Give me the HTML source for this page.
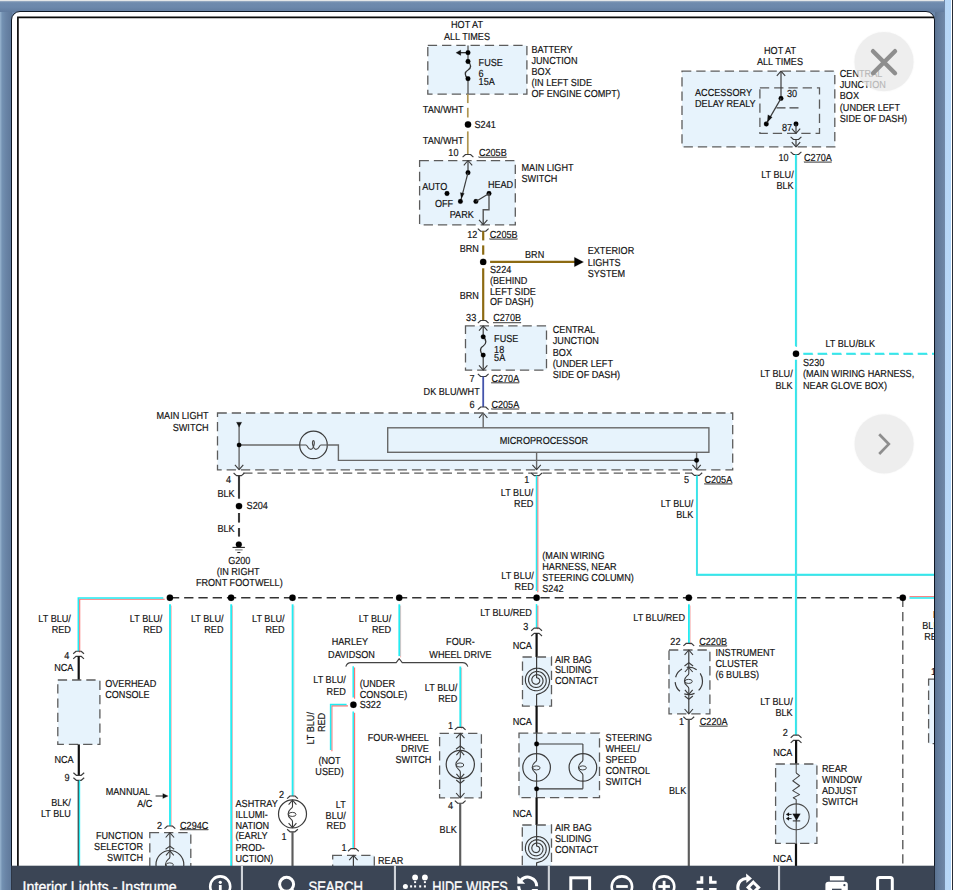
<!DOCTYPE html>
<html lang="en"><head><meta charset="utf-8"><title>Interior Lights - Instrument Illumination</title>
<style>
html,body{margin:0;padding:0;background:#6a86a9;}
body{width:953px;height:890px;overflow:hidden;position:relative;font-family:"Liberation Sans",Arial,sans-serif;}
#bg{position:absolute;left:0;top:0;width:12px;height:890px;
 background:linear-gradient(90deg,#9bb8d2 0,#85a2c0 1px,#7290b1 2.5px,#6984a6 6px,#5e7899 12px);}
#topstrip{position:absolute;left:0;top:0;width:945px;height:12px;
 background:linear-gradient(180deg,#e4e7e8 0,#e4e7e8 1px,#7f98b6 1.6px,#6f8bad 3px,#6c88ab 7px,#617c9f 12px);}
#panel{position:absolute;left:11px;top:11px;width:924px;height:900px;background:#fff;border:1.3px solid #0e1724;border-radius:9px 9px 0 0;box-sizing:border-box;}
#rightgrey{position:absolute;left:935px;top:0;width:10px;height:890px;
 background:linear-gradient(90deg,#5a7290 0,#627b9b 3px,#6f88a7 10px);}
#rightbar{position:absolute;left:944px;top:0;width:9px;height:890px;
 background:linear-gradient(90deg,#6f88a7 0,#6f88a7 .6px,#b4d6f8 1.2px,#b9d8f6 4px,#b2d6fa 6.6px,#fff 7.2px,#fff 8px,#2a2f38 8.3px,#20252e 9px);}
svg{position:absolute;left:0;top:0;}
svg text{font-family:"Liberation Sans",Arial,sans-serif;}
</style></head><body>
<div id="bg"></div>
<div id="rightgrey"></div>
<div id="topstrip"></div>
<div id="rightbar"></div>
<div id="panel"></div>

<svg id="dia" width="953" height="890" viewBox="0 0 953 890" font-size="10.2" fill="#141414" text-rendering="geometricPrecision">
<defs><clipPath id="cp"><rect x="19" y="18" width="915" height="848"/></clipPath></defs>
<path d="M17.9 890 L17.9 17.3 L934 17.3" fill="none" stroke="#0a0a0a" stroke-width="1.7"/>
<g clip-path="url(#cp)" stroke="#141414" stroke-width="0.18">
<rect x="427.8" y="45.4" width="99.1" height="48.8" fill="#e7f3fc" stroke="#5c5c5c" stroke-width="1.3" stroke-dasharray="9.3 4.95"/>
<text transform="translate(467.0 27.9) scale(0.893 1)" text-anchor="middle">HOT AT</text>
<text transform="translate(467.0 39.9) scale(0.893 1)" text-anchor="middle">ALL TIMES</text>
<path d="M468.0 45.4 L468.0 61.5" fill="none" stroke="#6a6a6a" stroke-width="1.5" stroke-linecap="butt" stroke-linejoin="miter"/>
<path d="M468.0 78.7 L468.0 94.2" fill="none" stroke="#6a6a6a" stroke-width="1.5" stroke-linecap="butt" stroke-linejoin="miter"/>
<path d="M468.0 52.7 L459.0 52.7" fill="none" stroke="#222" stroke-width="1.2" stroke-linecap="butt" stroke-linejoin="miter"/>
<path d="M455.9 52.7 L460.8 49.9 L460.8 55.5 Z" fill="#111"/>
<path d="M468 61.5 C471.6 64.5 471.4 68 468 70 C464.4 72 464.4 76 468 78.7" fill="none" stroke="#333" stroke-width="1.3" stroke-linejoin="round"/>
<circle cx="468.0" cy="52.7" r="2.4" fill="#000"/>
<circle cx="468.0" cy="61.5" r="2.4" fill="#000"/>
<circle cx="468.0" cy="78.7" r="2.4" fill="#000"/>
<text transform="translate(478.6 65.8) scale(0.893 1)">FUSE</text>
<text transform="translate(478.6 76.8) scale(0.893 1)">6</text>
<text transform="translate(478.6 84.8) scale(0.893 1)">15A</text>
<text transform="translate(531.5 53.0) scale(0.893 1)">BATTERY</text>
<text transform="translate(531.5 64.0) scale(0.893 1)">JUNCTION</text>
<text transform="translate(531.5 75.1) scale(0.893 1)">BOX</text>
<text transform="translate(531.5 86.1) scale(0.893 1)">(IN LEFT SIDE</text>
<text transform="translate(531.5 97.2) scale(0.893 1)">OF ENGINE COMPT)</text>
<path d="M467.8 94.2 L467.8 103.1" fill="none" stroke="#b09652" stroke-width="1.7" stroke-linecap="butt" stroke-linejoin="miter"/>
<path d="M467.8 107.8 L467.8 117.5" fill="none" stroke="#b09652" stroke-width="1.7" stroke-linecap="butt" stroke-linejoin="miter"/>
<path d="M467.8 131.4 L467.8 154.5" fill="none" stroke="#b09652" stroke-width="1.7" stroke-linecap="butt" stroke-linejoin="miter"/>
<text transform="translate(463.6 113.0) scale(0.893 1)" text-anchor="end">TAN/WHT</text>
<text transform="translate(463.6 143.6) scale(0.893 1)" text-anchor="end">TAN/WHT</text>
<circle cx="468.0" cy="124.5" r="3.2" fill="#000"/>
<text transform="translate(474.5 128.1) scale(0.893 1)">S241</text>
<text transform="translate(458.5 156.2) scale(0.893 1)" text-anchor="end">10</text>
<rect x="478.9" y="156.9" width="27.8" height="0.85" fill="#5a5a5a"/>
<text transform="translate(478.9 156.2) scale(0.893 1)">C205B</text>
<path d="M462.6 157.1 L465.5 154.5 L470.5 154.5 L473.4 157.1" fill="none" stroke="#3c3c3c" stroke-width="1.15" stroke-linejoin="round"/>
<rect x="419.6" y="160.6" width="95.7" height="64.2" fill="#e7f3fc" stroke="#5c5c5c" stroke-width="1.3" stroke-dasharray="9.3 4.95"/>
<path d="M463.8 165.3 L468.0 160.5 L472.2 165.3" fill="none" stroke="#3c3c3c" stroke-width="1.1" stroke-linejoin="round"/>
<path d="M468.0 160.5 L468.0 172.7" fill="none" stroke="#3c3c3c" stroke-width="1.2" stroke-linecap="butt" stroke-linejoin="miter"/>
<circle cx="468.0" cy="172.7" r="2.4" fill="#000"/>
<path d="M468.0 172.7 L460.6 201.4" fill="none" stroke="#3c3c3c" stroke-width="1.2" stroke-linecap="butt" stroke-linejoin="miter"/>
<path d="M461.3 198.6 L460.3 192.6 L464.3 193.6 Z" fill="#111"/>
<circle cx="447.0" cy="193.5" r="2.4" fill="#000"/>
<circle cx="460.4" cy="201.4" r="2.4" fill="#000"/>
<circle cx="475.9" cy="201.4" r="2.4" fill="#000"/>
<circle cx="489.0" cy="193.5" r="2.4" fill="#000"/>
<path d="M475.9 201.4 L489.0 193.5" fill="none" stroke="#3c3c3c" stroke-width="1.2" stroke-linecap="butt" stroke-linejoin="miter"/>
<path d="M489.0 193.5 L489.0 209.8 L483.2 209.8 L483.2 224.6" fill="none" stroke="#555" stroke-width="1.4" stroke-linecap="butt" stroke-linejoin="miter"/>
<path d="M479.0 219.8 L483.2 224.6 L487.4 219.8" fill="none" stroke="#3c3c3c" stroke-width="1.1" stroke-linejoin="round"/>
<text transform="translate(422.2 189.7) scale(0.893 1)">AUTO</text>
<text transform="translate(434.9 207.4) scale(0.893 1)">OFF</text>
<text transform="translate(449.7 217.7) scale(0.893 1)">PARK</text>
<text transform="translate(487.9 187.8) scale(0.893 1)">HEAD</text>
<text transform="translate(521.5 171.2) scale(0.893 1)">MAIN LIGHT</text>
<text transform="translate(521.5 182.2) scale(0.893 1)">SWITCH</text>
<path d="M477.8 228.6 L480.7 231.2 L485.7 231.2 L488.6 228.6" fill="none" stroke="#3c3c3c" stroke-width="1.15" stroke-linejoin="round"/>
<text transform="translate(477.3 238.1) scale(0.893 1)" text-anchor="end">12</text>
<rect x="489.8" y="238.7" width="27.8" height="0.85" fill="#5a5a5a"/>
<text transform="translate(489.8 237.9) scale(0.893 1)">C205B</text>
<path d="M483.2 231.2 L483.2 240.4" fill="none" stroke="#8c6a12" stroke-width="2.2" stroke-linecap="butt" stroke-linejoin="miter"/>
<path d="M483.2 245.4 L483.2 254.7" fill="none" stroke="#8c6a12" stroke-width="2.2" stroke-linecap="butt" stroke-linejoin="miter"/>
<path d="M483.2 268.3 L483.2 320.6" fill="none" stroke="#8c6a12" stroke-width="2.2" stroke-linecap="butt" stroke-linejoin="miter"/>
<path d="M490.1 261.9 L575.0 261.9" fill="none" stroke="#8c6a12" stroke-width="2.4" stroke-linecap="butt" stroke-linejoin="miter"/>
<path d="M583.6 262 L574.4 257.2 L574.4 266.8 Z" fill="#000"/>
<circle cx="483.2" cy="261.9" r="3.2" fill="#000"/>
<text transform="translate(478.9 251.8) scale(0.893 1)" text-anchor="end">BRN</text>
<text transform="translate(478.9 298.6) scale(0.893 1)" text-anchor="end">BRN</text>
<text transform="translate(525.0 257.6) scale(0.893 1)">BRN</text>
<text transform="translate(587.7 254.1) scale(0.893 1)">EXTERIOR</text>
<text transform="translate(587.7 265.7) scale(0.893 1)">LIGHTS</text>
<text transform="translate(587.7 277.2) scale(0.893 1)">SYSTEM</text>
<text transform="translate(490.0 272.6) scale(0.893 1)">S224</text>
<text transform="translate(490.0 284.1) scale(0.893 1)">(BEHIND</text>
<text transform="translate(490.0 294.9) scale(0.893 1)">LEFT SIDE</text>
<text transform="translate(490.0 305.4) scale(0.893 1)">OF DASH)</text>
<text transform="translate(476.2 321.4) scale(0.893 1)" text-anchor="end">33</text>
<rect x="493.2" y="322.2" width="27.8" height="0.85" fill="#5a5a5a"/>
<text transform="translate(493.2 321.4) scale(0.893 1)">C270B</text>
<path d="M477.8 323.1 L480.7 320.5 L485.7 320.5 L488.6 323.1" fill="none" stroke="#3c3c3c" stroke-width="1.15" stroke-linejoin="round"/>
<rect x="465.5" y="325.9" width="81.0" height="44.2" fill="#e7f3fc" stroke="#5c5c5c" stroke-width="1.3" stroke-dasharray="9.3 4.95"/>
<path d="M483.2 325.9 L483.2 336.8" fill="none" stroke="#3c3c3c" stroke-width="1.2" stroke-linecap="butt" stroke-linejoin="miter"/>
<path d="M483.2 355.1 L483.2 370.1" fill="none" stroke="#3c3c3c" stroke-width="1.2" stroke-linecap="butt" stroke-linejoin="miter"/>
<path d="M479.0 330.7 L483.2 325.9 L487.4 330.7" fill="none" stroke="#3c3c3c" stroke-width="1.1" stroke-linejoin="round"/>
<path d="M479.0 365.3 L483.2 370.1 L487.4 365.3" fill="none" stroke="#3c3c3c" stroke-width="1.1" stroke-linejoin="round"/>
<path d="M483.2 336.8 C486.8 339.8 486.6 344 483.2 346 C479.6 348 479.6 352.5 483.2 355.1" fill="none" stroke="#333" stroke-width="1.3" stroke-linejoin="round"/>
<circle cx="483.2" cy="336.8" r="2.4" fill="#000"/>
<circle cx="483.2" cy="355.1" r="2.4" fill="#000"/>
<text transform="translate(494.1 341.9) scale(0.893 1)">FUSE</text>
<text transform="translate(494.1 352.9) scale(0.893 1)">18</text>
<text transform="translate(494.1 360.9) scale(0.893 1)">5A</text>
<text transform="translate(552.8 332.9) scale(0.893 1)">CENTRAL</text>
<text transform="translate(552.8 344.2) scale(0.893 1)">JUNCTION</text>
<text transform="translate(552.8 355.6) scale(0.893 1)">BOX</text>
<text transform="translate(552.8 366.9) scale(0.893 1)">(UNDER LEFT</text>
<text transform="translate(552.8 378.1) scale(0.893 1)">SIDE OF DASH)</text>
<path d="M477.8 373.9 L480.7 376.5 L485.7 376.5 L488.6 373.9" fill="none" stroke="#3c3c3c" stroke-width="1.15" stroke-linejoin="round"/>
<text transform="translate(474.5 381.6) scale(0.893 1)" text-anchor="end">7</text>
<rect x="491.4" y="382.3" width="27.8" height="0.85" fill="#5a5a5a"/>
<text transform="translate(491.4 381.6) scale(0.893 1)">C270A</text>
<path d="M483.2 376.5 L483.2 407.0" fill="none" stroke="#4454ab" stroke-width="1.8" stroke-linecap="butt" stroke-linejoin="miter"/>
<text transform="translate(479.7 394.9) scale(0.893 1)" text-anchor="end">DK BLU/WHT</text>
<text transform="translate(474.5 407.9) scale(0.893 1)" text-anchor="end">6</text>
<rect x="491.4" y="408.6" width="27.8" height="0.85" fill="#5a5a5a"/>
<text transform="translate(491.4 407.9) scale(0.893 1)">C205A</text>
<path d="M477.8 409.6 L480.7 407.0 L485.7 407.0 L488.6 409.6" fill="none" stroke="#3c3c3c" stroke-width="1.15" stroke-linejoin="round"/>
<rect x="217.5" y="413.0" width="515.2" height="56.8" fill="#e7f3fc" stroke="#5c5c5c" stroke-width="1.3" stroke-dasharray="9.3 4.95"/>
<path d="M243.2 473.2 L691.6 473.2" fill="none" stroke="#5c5c5c" stroke-width="1.3" stroke-dasharray="9.3 4.95" stroke-linecap="butt" stroke-linejoin="miter"/>
<path d="M479.0 417.8 L483.2 413.0 L487.4 417.8" fill="none" stroke="#3c3c3c" stroke-width="1.1" stroke-linejoin="round"/>
<path d="M483.2 413.0 L483.2 427.8" fill="none" stroke="#686868" stroke-width="1.4" stroke-linecap="butt" stroke-linejoin="miter"/>
<rect x="387.7" y="427.8" width="321.2" height="24.5" fill="none" stroke="#686868" stroke-width="1.4"/>
<text transform="translate(543.9 444.2) scale(0.893 1)" text-anchor="middle">MICROPROCESSOR</text>
<text transform="translate(208.6 418.6) scale(0.893 1)" text-anchor="end">MAIN LIGHT</text>
<text transform="translate(208.6 430.6) scale(0.893 1)" text-anchor="end">SWITCH</text>
<path d="M239.1 426.0 L239.1 469.6" fill="none" stroke="#686868" stroke-width="1.4" stroke-linecap="butt" stroke-linejoin="miter"/>
<path d="M239.1 427.3 L236.4 422.2 L241.8 422.2 Z" fill="#111"/>
<path d="M234.9 464.8 L239.1 469.6 L243.3 464.8" fill="none" stroke="#3c3c3c" stroke-width="1.1" stroke-linejoin="round"/>
<path d="M239.1 445.0 L299.7 445.0" fill="none" stroke="#686868" stroke-width="1.4" stroke-linecap="butt" stroke-linejoin="miter"/>
<circle cx="313.5" cy="444.9" r="13.8" fill="none" stroke="#3c3c3c" stroke-width="1.2"/>
<path d="M299.6 445.0 L305.8 445.0 C307.8 445.0 307.4 449.3 310.8 449.3 C314.0 449.3 315.4 440.6 313.4 440.6 C311.4 440.6 312.8 449.3 316.0 449.3 C319.4 449.3 319.0 445.0 321.0 445.0 L327.2 445.0" fill="none" stroke="#4a4a4a" stroke-width="1.15" stroke-linejoin="round"/>
<path d="M327.2 445.0 L338.4 445.0 L338.4 460.4 L696.6 460.4" fill="none" stroke="#686868" stroke-width="1.4" stroke-linecap="butt" stroke-linejoin="miter"/>
<circle cx="239.1" cy="445.0" r="2.3" fill="#000"/>
<path d="M536.6 452.3 L536.6 469.6" fill="none" stroke="#686868" stroke-width="1.4" stroke-linecap="butt" stroke-linejoin="miter"/>
<path d="M532.4 464.8 L536.6 469.6 L540.8 464.8" fill="none" stroke="#3c3c3c" stroke-width="1.1" stroke-linejoin="round"/>
<path d="M696.6 452.3 L696.6 469.6" fill="none" stroke="#686868" stroke-width="1.4" stroke-linecap="butt" stroke-linejoin="miter"/>
<circle cx="696.6" cy="460.3" r="2.4" fill="#000"/>
<path d="M692.4 464.8 L696.6 469.6 L700.8 464.8" fill="none" stroke="#3c3c3c" stroke-width="1.1" stroke-linejoin="round"/>
<path d="M233.6 473.0 L236.5 475.6 L241.5 475.6 L244.4 473.0" fill="none" stroke="#3c3c3c" stroke-width="1.15" stroke-linejoin="round"/>
<path d="M531.2 473.0 L534.1 475.6 L539.1 475.6 L542.0 473.0" fill="none" stroke="#3c3c3c" stroke-width="1.15" stroke-linejoin="round"/>
<path d="M691.4 472.8 L694.3 475.4 L699.3 475.4 L702.2 472.8" fill="none" stroke="#3c3c3c" stroke-width="1.15" stroke-linejoin="round"/>
<text transform="translate(231.0 482.8) scale(0.893 1)" text-anchor="end">4</text>
<text transform="translate(529.2 482.8) scale(0.893 1)" text-anchor="end">1</text>
<text transform="translate(689.0 482.8) scale(0.893 1)" text-anchor="end">5</text>
<rect x="704.4" y="483.5" width="27.8" height="0.85" fill="#5a5a5a"/>
<text transform="translate(704.4 482.8) scale(0.893 1)">C205A</text>
<path d="M239.0 475.6 L239.0 498.7" fill="none" stroke="#3a3a3a" stroke-width="2.1" stroke-linecap="butt" stroke-linejoin="miter"/>
<path d="M239.0 513.0 L239.0 522.6" fill="none" stroke="#3a3a3a" stroke-width="2.1" stroke-linecap="butt" stroke-linejoin="miter"/>
<path d="M239.0 528.0 L239.0 536.6" fill="none" stroke="#3a3a3a" stroke-width="2.1" stroke-linecap="butt" stroke-linejoin="miter"/>
<text transform="translate(234.7 496.6) scale(0.893 1)" text-anchor="end">BLK</text>
<text transform="translate(234.7 531.8) scale(0.893 1)" text-anchor="end">BLK</text>
<circle cx="239.0" cy="506.1" r="3.2" fill="#000"/>
<text transform="translate(246.6 508.6) scale(0.893 1)">S204</text>
<circle cx="238.8" cy="544.4" r="3.0" fill="#000"/>
<path d="M232.5 547.4 L244.9 547.4" fill="none" stroke="#222" stroke-width="1.1" stroke-linecap="butt" stroke-linejoin="miter"/>
<path d="M235.2 549.9 L242.6 549.9" fill="none" stroke="#777" stroke-width="1.1" stroke-linecap="butt" stroke-linejoin="miter"/>
<path d="M237.3 552.5 L240.4 552.5" fill="none" stroke="#222" stroke-width="1.1" stroke-linecap="butt" stroke-linejoin="miter"/>
<text transform="translate(239.3 563.9) scale(0.893 1)" text-anchor="middle">G200</text>
<text transform="translate(238.1 575.0) scale(0.893 1)" text-anchor="middle">(IN RIGHT</text>
<text transform="translate(239.3 585.8) scale(0.893 1)" text-anchor="middle">FRONT FOOTWELL)</text>
<path d="M537.8 476.8 L537.8 592.2" fill="none" stroke="#fb6e6e" stroke-width="1.1" stroke-linecap="butt" stroke-linejoin="miter"/>
<path d="M536.5 475.5 L536.5 590.9" fill="none" stroke="#22ecf2" stroke-width="1.5" stroke-linecap="butt" stroke-linejoin="miter"/>
<text transform="translate(533.3 496.1) scale(0.893 1)" text-anchor="end">LT BLU/</text>
<text transform="translate(533.3 506.6) scale(0.893 1)" text-anchor="end">RED</text>
<text transform="translate(533.8 579.1) scale(0.893 1)" text-anchor="end">LT BLU/</text>
<text transform="translate(533.8 590.1) scale(0.893 1)" text-anchor="end">RED</text>
<text transform="translate(542.3 558.6) scale(0.893 1)">(MAIN WIRING</text>
<text transform="translate(542.3 569.6) scale(0.893 1)">HARNESS, NEAR</text>
<text transform="translate(542.3 580.6) scale(0.893 1)">STEERING COLUMN)</text>
<text transform="translate(542.3 591.6) scale(0.893 1)">S242</text>
<path d="M696.9 475.4 L696.9 574.8 L940.0 574.8" fill="none" stroke="#27eef3" stroke-width="1.9" stroke-linecap="butt" stroke-linejoin="miter"/>
<path d="M697.3 475.8 L697.3 575.2 L940.4 575.2" fill="none" stroke="#56dbe0" stroke-width="1.1" stroke-linecap="butt" stroke-linejoin="miter"/>
<text transform="translate(693.4 506.8) scale(0.893 1)" text-anchor="end">LT BLU/</text>
<text transform="translate(693.4 517.8) scale(0.893 1)" text-anchor="end">BLK</text>
<path d="M169.9 597.7 L902.8 597.7" fill="none" stroke="#333" stroke-width="1.35" stroke-dasharray="9.3 4.95" stroke-linecap="butt" stroke-linejoin="miter"/>
<path d="M902.8 597.7 L902.8 866.0" fill="none" stroke="#555" stroke-width="1.35" stroke-dasharray="9.3 4.95" stroke-linecap="butt" stroke-linejoin="miter"/>
<path d="M164.7 599.3 L79.7 599.3 L79.7 652.4" fill="none" stroke="#fb6e6e" stroke-width="1.1" stroke-linecap="butt" stroke-linejoin="miter"/>
<path d="M163.3 598.0 L78.3 598.0 L78.3 651.1" fill="none" stroke="#22ecf2" stroke-width="1.5" stroke-linecap="butt" stroke-linejoin="miter"/>
<text transform="translate(70.9 621.9) scale(0.893 1)" text-anchor="end">LT BLU/</text>
<text transform="translate(70.9 632.8) scale(0.893 1)" text-anchor="end">RED</text>
<text transform="translate(69.4 658.6) scale(0.893 1)" text-anchor="end">4</text>
<path d="M73.2 653.8 L76.1 651.2 L81.1 651.2 L84.0 653.8" fill="none" stroke="#3c3c3c" stroke-width="1.15" stroke-linejoin="round"/>
<path d="M73.2 658.9 L76.1 656.3 L81.1 656.3 L84.0 658.9" fill="none" stroke="#3c3c3c" stroke-width="1.15" stroke-linejoin="round"/>
<path d="M78.7 656.3 L78.7 680.0" fill="none" stroke="#111" stroke-width="2.2" stroke-linecap="butt" stroke-linejoin="miter"/>
<text transform="translate(73.4 670.9) scale(0.893 1)" text-anchor="end">NCA</text>
<rect x="57.8" y="680.0" width="42.1" height="64.4" fill="#e7f3fc" stroke="#5c5c5c" stroke-width="1.3" stroke-dasharray="9.3 4.95"/>
<text transform="translate(105.2 686.8) scale(0.893 1)">OVERHEAD</text>
<text transform="translate(105.2 697.9) scale(0.893 1)">CONSOLE</text>
<path d="M78.8 744.4 L78.8 775.3" fill="none" stroke="#111" stroke-width="2.2" stroke-linecap="butt" stroke-linejoin="miter"/>
<text transform="translate(73.6 762.9) scale(0.893 1)" text-anchor="end">NCA</text>
<text transform="translate(69.6 781.0) scale(0.893 1)" text-anchor="end">9</text>
<path d="M73.4 772.7 L76.3 775.3 L81.3 775.3 L84.2 772.7" fill="none" stroke="#3c3c3c" stroke-width="1.15" stroke-linejoin="round"/>
<path d="M73.4 777.7 L76.3 780.3 L81.3 780.3 L84.2 777.7" fill="none" stroke="#3c3c3c" stroke-width="1.15" stroke-linejoin="round"/>
<path d="M78.3 780.3 L78.3 866.0" fill="none" stroke="#3a3a3a" stroke-width="1.3" stroke-linecap="butt" stroke-linejoin="miter"/>
<path d="M79.5 780.3 L79.5 866.0" fill="none" stroke="#22ecf2" stroke-width="1.35" stroke-linecap="butt" stroke-linejoin="miter"/>
<text transform="translate(70.9 805.8) scale(0.893 1)" text-anchor="end">BLK/</text>
<text transform="translate(70.9 816.6) scale(0.893 1)" text-anchor="end">LT BLU</text>
<path d="M171.3 605.6 L171.3 827.4" fill="none" stroke="#f8b4b4" stroke-width="0.95" stroke-linecap="butt" stroke-linejoin="miter"/>
<path d="M170.0 604.3 L170.0 826.1" fill="none" stroke="#22ecf2" stroke-width="1.85" stroke-linecap="butt" stroke-linejoin="miter"/>
<text transform="translate(162.4 621.9) scale(0.893 1)" text-anchor="end">LT BLU/</text>
<text transform="translate(162.4 632.8) scale(0.893 1)" text-anchor="end">RED</text>
<text transform="translate(105.7 794.5) scale(0.893 1)">MANNUAL</text>
<text transform="translate(152.3 806.5) scale(0.893 1)" text-anchor="end">A/C</text>
<path d="M155.6 796.0 L164.0 796.0" fill="none" stroke="#3c3c3c" stroke-width="1.1" stroke-linecap="butt" stroke-linejoin="miter"/>
<path d="M168.2 796 L162.8 793.4 L162.8 798.6 Z" fill="#111"/>
<text transform="translate(162.0 828.5) scale(0.893 1)" text-anchor="end">2</text>
<rect x="180.0" y="829.2" width="28.4" height="0.85" fill="#5a5a5a"/>
<text transform="translate(180.0 828.5) scale(0.893 1)">C294C</text>
<path d="M164.5 828.6 L167.4 826.0 L172.4 826.0 L175.3 828.6" fill="none" stroke="#3c3c3c" stroke-width="1.15" stroke-linejoin="round"/>
<rect x="149.8" y="832.7" width="41.0" height="47.3" fill="#e7f3fc" stroke="#5c5c5c" stroke-width="1.3" stroke-dasharray="9.3 4.95"/>
<text transform="translate(143.0 838.5) scale(0.893 1)" text-anchor="end">FUNCTION</text>
<text transform="translate(143.0 849.6) scale(0.893 1)" text-anchor="end">SELECTOR</text>
<text transform="translate(143.0 860.6) scale(0.893 1)" text-anchor="end">SWITCH</text>
<path d="M169.9 832.7 L169.9 850.5" fill="none" stroke="#3c3c3c" stroke-width="1.2" stroke-linecap="butt" stroke-linejoin="miter"/>
<path d="M169.9 878.3 L169.9 900.0" fill="none" stroke="#3c3c3c" stroke-width="1.2" stroke-linecap="butt" stroke-linejoin="miter"/>
<path d="M165.7 837.5 L169.9 832.7 L174.1 837.5" fill="none" stroke="#3c3c3c" stroke-width="1.1" stroke-linejoin="round"/>
<path d="M165.7 895.2 L169.9 900.0 L174.1 895.2" fill="none" stroke="#3c3c3c" stroke-width="1.1" stroke-linejoin="round"/>
<path d="M165.6 849.3 L169.9 846.1 L174.2 849.3" fill="none" stroke="#3c3c3c" stroke-width="1.1" stroke-linejoin="round"/>
<path d="M165.8 879.7 L169.9 882.9 L174.0 879.7" fill="none" stroke="#3c3c3c" stroke-width="1.1" stroke-linejoin="round"/>
<circle cx="169.9" cy="864.4" r="13.9" fill="none" stroke="#3c3c3c" stroke-width="1.2"/>
<path d="M169.9 850.5 L169.9 856.9 C169.9 859.4 165.3 859.9 165.5 864.4 C165.3 868.9 169.9 869.4 169.9 871.9 L169.9 878.3" fill="none" stroke="#3c3c3c" stroke-width="1.1" stroke-linejoin="round"/>
<ellipse cx="169.7" cy="864.9" rx="3.7" ry="2.05" fill="none" stroke="#3c3c3c" stroke-width="0.95"/>
<path d="M166.0 855.3 L169.9 850.8 L173.8 855.3" fill="none" stroke="#3c3c3c" stroke-width="1.1" stroke-linejoin="round"/>
<path d="M166.0 873.5 L169.9 878.0 L173.8 873.5" fill="none" stroke="#3c3c3c" stroke-width="1.1" stroke-linejoin="round"/>
<path d="M232.5 605.6 L232.5 867.4" fill="none" stroke="#f8b4b4" stroke-width="0.95" stroke-linecap="butt" stroke-linejoin="miter"/>
<path d="M231.2 604.3 L231.2 866.1" fill="none" stroke="#22ecf2" stroke-width="1.85" stroke-linecap="butt" stroke-linejoin="miter"/>
<text transform="translate(223.5 621.9) scale(0.893 1)" text-anchor="end">LT BLU/</text>
<text transform="translate(223.5 632.8) scale(0.893 1)" text-anchor="end">RED</text>
<path d="M293.9 605.6 L293.9 797.4" fill="none" stroke="#f8b4b4" stroke-width="0.95" stroke-linecap="butt" stroke-linejoin="miter"/>
<path d="M292.6 604.3 L292.6 796.1" fill="none" stroke="#22ecf2" stroke-width="1.85" stroke-linecap="butt" stroke-linejoin="miter"/>
<text transform="translate(284.6 621.9) scale(0.893 1)" text-anchor="end">LT BLU/</text>
<text transform="translate(284.6 632.8) scale(0.893 1)" text-anchor="end">RED</text>
<text transform="translate(284.0 798.2) scale(0.893 1)" text-anchor="end">2</text>
<path d="M287.1 798.6 L290.0 796.0 L295.0 796.0 L297.9 798.6" fill="none" stroke="#3c3c3c" stroke-width="1.15" stroke-linejoin="round"/>
<circle cx="292.5" cy="813.9" r="14.0" fill="none" stroke="#3c3c3c" stroke-width="1.2"/>
<path d="M292.5 799.9 L292.5 806.4 C292.5 808.9 287.9 809.4 288.1 813.9 C287.9 818.4 292.5 818.9 292.5 821.4 L292.5 827.9" fill="none" stroke="#3c3c3c" stroke-width="1.1" stroke-linejoin="round"/>
<ellipse cx="292.3" cy="814.4" rx="3.7" ry="2.05" fill="none" stroke="#3c3c3c" stroke-width="0.95"/>
<path d="M288.6 804.7 L292.5 800.2 L296.4 804.7" fill="none" stroke="#3c3c3c" stroke-width="1.1" stroke-linejoin="round"/>
<path d="M288.6 823.1 L292.5 827.6 L296.4 823.1" fill="none" stroke="#3c3c3c" stroke-width="1.1" stroke-linejoin="round"/>
<path d="M287.1 829.2 L290.0 831.8 L295.0 831.8 L297.9 829.2" fill="none" stroke="#3c3c3c" stroke-width="1.15" stroke-linejoin="round"/>
<text transform="translate(286.5 840.2) scale(0.893 1)" text-anchor="end">1</text>
<path d="M292.5 831.8 L292.5 866.0" fill="none" stroke="#5c5c5c" stroke-width="2.15" stroke-linecap="butt" stroke-linejoin="miter"/>
<text transform="translate(235.5 806.5) scale(0.893 1)">ASHTRAY</text>
<text transform="translate(235.5 817.6) scale(0.893 1)">ILLUMI-</text>
<text transform="translate(235.5 828.6) scale(0.893 1)">NATION</text>
<text transform="translate(235.5 838.8) scale(0.893 1)">(EARLY</text>
<text transform="translate(235.5 850.6) scale(0.893 1)">PROD-</text>
<text transform="translate(235.5 861.5) scale(0.893 1)">UCTION)</text>
<path d="M400.6 605.6 L400.6 657.4" fill="none" stroke="#f8b4b4" stroke-width="0.95" stroke-linecap="butt" stroke-linejoin="miter"/>
<path d="M399.3 604.3 L399.3 656.1" fill="none" stroke="#22ecf2" stroke-width="1.85" stroke-linecap="butt" stroke-linejoin="miter"/>
<text transform="translate(391.2 621.9) scale(0.893 1)" text-anchor="end">LT BLU/</text>
<text transform="translate(391.2 632.8) scale(0.893 1)" text-anchor="end">RED</text>
<text transform="translate(349.9 645.2) scale(0.893 1)" text-anchor="middle">HARLEY</text>
<text transform="translate(351.5 657.5) scale(0.893 1)" text-anchor="middle">DAVIDSON</text>
<text transform="translate(460.5 644.9) scale(0.893 1)" text-anchor="middle">FOUR-</text>
<text transform="translate(460.5 657.6) scale(0.893 1)" text-anchor="middle">WHEEL DRIVE</text>
<path d="M345.8 666.6 Q347 662.6 351 662.6 L396.2 662.6 L399.2 658.6 L402.2 662.6 L462.5 662.6 Q466.5 662.6 467.8 666.6" fill="none" stroke="#444" stroke-width="1.1" stroke-linejoin="round"/>
<path d="M354.6 667.6 L354.6 698.8" fill="none" stroke="#fb6e6e" stroke-width="1.1" stroke-linecap="butt" stroke-linejoin="miter"/>
<path d="M353.2 666.2 L353.2 697.5" fill="none" stroke="#22ecf2" stroke-width="1.5" stroke-linecap="butt" stroke-linejoin="miter"/>
<path d="M354.6 712.8 L354.6 849.6" fill="none" stroke="#fb6e6e" stroke-width="1.1" stroke-linecap="butt" stroke-linejoin="miter"/>
<path d="M353.2 711.5 L353.2 848.2" fill="none" stroke="#22ecf2" stroke-width="1.5" stroke-linecap="butt" stroke-linejoin="miter"/>
<text transform="translate(345.8 683.0) scale(0.893 1)" text-anchor="end">LT BLU/</text>
<text transform="translate(345.8 694.8) scale(0.893 1)" text-anchor="end">RED</text>
<text transform="translate(359.7 686.8) scale(0.893 1)">(UNDER</text>
<text transform="translate(359.7 697.9) scale(0.893 1)">CONSOLE)</text>
<text transform="translate(359.7 707.5) scale(0.893 1)">S322</text>
<path d="M347.9 705.9 L331.9 705.9 L331.9 751.3" fill="none" stroke="#fb6e6e" stroke-width="1.1" stroke-linecap="butt" stroke-linejoin="miter"/>
<path d="M346.6 704.6 L330.6 704.6 L330.6 750.0" fill="none" stroke="#22ecf2" stroke-width="1.5" stroke-linecap="butt" stroke-linejoin="miter"/>
<circle cx="353.4" cy="704.7" r="3.2" fill="#000"/>
<text transform="translate(314.3,744.6) rotate(-90) scale(0.893 1)">LT BLU/</text>
<text transform="translate(325.2,712.8) rotate(-90) scale(0.893 1)" text-anchor="end">RED</text>
<text transform="translate(329.5 763.8) scale(0.893 1)" text-anchor="middle">(NOT</text>
<text transform="translate(329.5 775.0) scale(0.893 1)" text-anchor="middle">USED)</text>
<text transform="translate(345.8 807.8) scale(0.893 1)" text-anchor="end">LT</text>
<text transform="translate(345.8 818.5) scale(0.893 1)" text-anchor="end">BLU/</text>
<text transform="translate(345.8 829.4) scale(0.893 1)" text-anchor="end">RED</text>
<text transform="translate(346.5 851.1) scale(0.893 1)" text-anchor="end">1</text>
<path d="M348.0 851.2 L350.9 848.6 L355.9 848.6 L358.8 851.2" fill="none" stroke="#3c3c3c" stroke-width="1.15" stroke-linejoin="round"/>
<rect x="332.7" y="855.4" width="41.6" height="24.6" fill="#e7f3fc" stroke="#5c5c5c" stroke-width="1.3" stroke-dasharray="9.3 4.95"/>
<path d="M349.2 860.2 L353.4 855.4 L357.6 860.2" fill="none" stroke="#3c3c3c" stroke-width="1.1" stroke-linejoin="round"/>
<path d="M353.4 855.4 L353.4 866.0" fill="none" stroke="#3c3c3c" stroke-width="1.2" stroke-linecap="butt" stroke-linejoin="miter"/>
<text transform="translate(378.0 863.8) scale(0.893 1)">REAR</text>
<path d="M461.6 667.8 L461.6 728.9" fill="none" stroke="#f8b4b4" stroke-width="0.95" stroke-linecap="butt" stroke-linejoin="miter"/>
<path d="M460.3 666.5 L460.3 727.6" fill="none" stroke="#22ecf2" stroke-width="1.85" stroke-linecap="butt" stroke-linejoin="miter"/>
<text transform="translate(457.4 690.8) scale(0.893 1)" text-anchor="end">LT BLU/</text>
<text transform="translate(457.4 701.9) scale(0.893 1)" text-anchor="end">RED</text>
<text transform="translate(453.0 728.6) scale(0.893 1)" text-anchor="end">1</text>
<path d="M454.8 729.9 L457.7 727.3 L462.7 727.3 L465.6 729.9" fill="none" stroke="#3c3c3c" stroke-width="1.15" stroke-linejoin="round"/>
<rect x="439.6" y="733.4" width="41.8" height="64.4" fill="#e7f3fc" stroke="#5c5c5c" stroke-width="1.3" stroke-dasharray="9.3 4.95"/>
<text transform="translate(428.9 740.9) scale(0.893 1)" text-anchor="end">FOUR-WHEEL</text>
<text transform="translate(428.9 752.0) scale(0.893 1)" text-anchor="end">DRIVE</text>
<text transform="translate(431.4 762.9) scale(0.893 1)" text-anchor="end">SWITCH</text>
<path d="M460.3 733.4 L460.3 750.4" fill="none" stroke="#3c3c3c" stroke-width="1.2" stroke-linecap="butt" stroke-linejoin="miter"/>
<path d="M460.3 778.6 L460.3 797.8" fill="none" stroke="#3c3c3c" stroke-width="1.2" stroke-linecap="butt" stroke-linejoin="miter"/>
<path d="M456.1 738.2 L460.3 733.4 L464.5 738.2" fill="none" stroke="#3c3c3c" stroke-width="1.1" stroke-linejoin="round"/>
<path d="M456.1 793.0 L460.3 797.8 L464.5 793.0" fill="none" stroke="#3c3c3c" stroke-width="1.1" stroke-linejoin="round"/>
<path d="M456.0 749.2 L460.3 746.0 L464.6 749.2" fill="none" stroke="#3c3c3c" stroke-width="1.1" stroke-linejoin="round"/>
<path d="M456.2 780.0 L460.3 783.2 L464.4 780.0" fill="none" stroke="#3c3c3c" stroke-width="1.1" stroke-linejoin="round"/>
<circle cx="460.3" cy="764.5" r="14.1" fill="none" stroke="#3c3c3c" stroke-width="1.2"/>
<path d="M460.3 750.4 L460.3 757.0 C460.3 759.5 455.7 760.0 455.9 764.5 C455.7 769.0 460.3 769.5 460.3 772.0 L460.3 778.6" fill="none" stroke="#3c3c3c" stroke-width="1.1" stroke-linejoin="round"/>
<ellipse cx="460.1" cy="765.0" rx="3.7" ry="2.05" fill="none" stroke="#3c3c3c" stroke-width="0.95"/>
<path d="M456.4 755.2 L460.3 750.7 L464.2 755.2" fill="none" stroke="#3c3c3c" stroke-width="1.1" stroke-linejoin="round"/>
<path d="M456.4 773.8 L460.3 778.3 L464.2 773.8" fill="none" stroke="#3c3c3c" stroke-width="1.1" stroke-linejoin="round"/>
<path d="M454.8 800.6 L457.7 803.2 L462.7 803.2 L465.6 800.6" fill="none" stroke="#3c3c3c" stroke-width="1.15" stroke-linejoin="round"/>
<text transform="translate(453.0 809.0) scale(0.893 1)" text-anchor="end">4</text>
<path d="M460.2 803.2 L460.2 866.0" fill="none" stroke="#5c5c5c" stroke-width="2.15" stroke-linecap="butt" stroke-linejoin="miter"/>
<text transform="translate(439.6 832.8) scale(0.893 1)">BLK</text>
<path d="M537.8 605.4 L537.8 629.3" fill="none" stroke="#fb6e6e" stroke-width="1.1" stroke-linecap="butt" stroke-linejoin="miter"/>
<path d="M536.5 604.1 L536.5 628.0" fill="none" stroke="#22ecf2" stroke-width="1.5" stroke-linecap="butt" stroke-linejoin="miter"/>
<text transform="translate(531.9 615.6) scale(0.893 1)" text-anchor="end">LT BLU/RED</text>
<text transform="translate(528.3 629.5) scale(0.893 1)" text-anchor="end">3</text>
<path d="M531.2 630.7 L534.1 628.1 L539.1 628.1 L542.0 630.7" fill="none" stroke="#3c3c3c" stroke-width="1.15" stroke-linejoin="round"/>
<path d="M531.2 636.0 L534.1 633.4 L539.1 633.4 L542.0 636.0" fill="none" stroke="#3c3c3c" stroke-width="1.15" stroke-linejoin="round"/>
<path d="M536.6 633.4 L536.6 657.0" fill="none" stroke="#111" stroke-width="2.2" stroke-linecap="butt" stroke-linejoin="miter"/>
<text transform="translate(531.9 649.0) scale(0.893 1)" text-anchor="end">NCA</text>
<rect x="522.5" y="657.0" width="29.0" height="49.1" fill="#e7f3fc" stroke="#5c5c5c" stroke-width="1.3" stroke-dasharray="9.3 4.95"/>
<path d="M536.6 657.0 L536.6 678.0" fill="none" stroke="#3c3c3c" stroke-width="1.2" stroke-linecap="butt" stroke-linejoin="miter"/>
<path d="M536.6 678.0 L536.8 678.0 L537.0 677.9 L537.2 677.9 L537.4 678.0 L537.6 678.0 L537.8 678.1 L538.0 678.1 L538.2 678.2 L538.4 678.3 L538.6 678.5 L538.8 678.6 L539.0 678.8 L539.1 679.0 L539.3 679.2 L539.4 679.4 L539.5 679.6 L539.6 679.8 L539.7 680.1 L539.7 680.4 L539.7 680.6 L539.8 680.9 L539.7 681.2 L539.7 681.4 L539.6 681.7 L539.5 682.0 L539.4 682.2 L539.3 682.5 L539.1 682.7 L538.9 683.0 L538.7 683.2 L538.5 683.4 L538.3 683.6 L538.0 683.8 L537.7 683.9 L537.4 684.0 L537.1 684.1 L536.8 684.2 L536.5 684.2 L536.1 684.3 L535.8 684.2 L535.4 684.2 L535.1 684.1 L534.8 684.0 L534.4 683.9 L534.1 683.8 L533.8 683.6 L533.5 683.4 L533.2 683.1 L533.0 682.9 L532.8 682.6 L532.5 682.3 L532.3 681.9 L532.2 681.6 L532.1 681.2 L532.0 680.8 L531.9 680.4 L531.8 680.0 L531.8 679.6 L531.9 679.2 L531.9 678.8 L532.0 678.4 L532.2 678.0 L532.3 677.7 L532.5 677.3 L532.8 676.9 L533.0 676.6 L533.3 676.3 L533.7 676.0 L534.0 675.7 L534.4 675.5 L534.8 675.2 L535.2 675.1 L535.6 674.9 L536.1 674.8 L536.5 674.8 L537.0 674.7 L537.5 674.7 L537.9 674.8 L538.4 674.9 L538.9 675.0 L539.3 675.2 L539.8 675.4 L540.2 675.6 L540.6 675.9 L541.0 676.2 L541.3 676.6 L541.7 677.0 L542.0 677.4 L542.2 677.8 L542.5 678.3 L542.6 678.8 L542.8 679.3 L542.9 679.8 L543.0 680.3 L543.0 680.9 L543.0 681.4 L542.9 681.9 L542.8 682.5 L542.6 683.0 L542.4 683.5 L542.1 684.0 L541.8 684.5 L541.5 684.9 L541.1 685.4 L540.7 685.8 L540.3 686.1 L539.8 686.5 L539.3 686.7 L538.7 687.0 L538.2 687.2 L537.6 687.3 L537.0 687.4 L536.4 687.5 L535.8 687.5 L535.2 687.4 L534.6 687.3 L534.0 687.2 L533.4 687.0 L532.9 686.7 L532.3 686.4 L531.8 686.1 L531.3 685.7 L530.8 685.3 L530.4 684.8 L530.0 684.3 L529.7 683.7 L529.4 683.2 L529.1 682.6 L528.9 681.9 L528.7 681.3 L528.6 680.6 L528.6 680.0 L528.6 679.3 L528.7 678.6 L528.8 678.0 L529.0 677.3 L529.2 676.7 L529.5 676.0 L529.9 675.4 L530.3 674.9 L530.7 674.3 L531.2 673.8 L531.7 673.3 L532.3 672.9 L532.9 672.6 L533.6 672.2 L534.2 672.0 L534.9 671.8 L535.7 671.6 L536.4 671.5 L537.1 671.5 L537.9 671.5 L538.6 671.6 L539.3 671.8 L540.1 672.0 L540.8 672.3 L541.4 672.6 L542.1 673.0 L542.7 673.5 L543.3 674.0 L543.8 674.5 L544.3 675.1 L544.8 675.8 L545.2 676.4 L545.5 677.1 L545.8 677.9 L546.0 678.7 L546.1 679.4 L546.2 680.2 L546.2 681.0 L546.2 681.9 L546.0 682.7 L545.9 683.5 L545.6 684.2 L545.3 685.0 L544.9 685.7 L544.4 686.4 L543.9 687.1 L543.4 687.7 L542.8 688.3 L542.1 688.8 L541.4 689.3 L540.6 689.7 L539.9 690.0 L539.0 690.3 L538.2 690.5 L537.3 690.7 L536.5 690.7 L535.6 690.7 L534.7 690.6 L533.9 690.5 L533.0 690.3 L532.2 690.0 L531.4 689.6 L530.6 689.2 L529.8 688.7 L529.1 688.1 L528.5 687.5 L527.8 686.8 L527.3 686.1 L526.8 685.3 L526.4 684.5 L526.0 683.6 L525.7 682.7 L525.5 681.8 L525.4 680.9 L525.4 680.0 L525.4 679.0 L525.5 678.1 L525.7 677.2 L525.9 676.2 L526.3 675.3 L526.7 674.5 L527.2 673.6 L527.7 672.8 L528.3 672.1 L529.0 671.4 L529.8 670.8 L530.6 670.2 L531.4 669.7 L532.3 669.2 L533.2 668.9 L534.2 668.6 L535.2 668.4 L536.2 668.3 L537.2 668.2 L538.2 668.3 L539.2 668.4 L540.2 668.6 L541.2 668.9 L542.1 669.3 L543.0 669.8 L543.9 670.3 L544.8 670.9 L545.5 671.6 L546.3 672.4 L546.9 673.2 L547.5 674.0 L548.1 675.0 L548.5 675.9 L548.9 676.9 L549.1 677.9 L549.3 679.0 L549.5 680.1 L549.5 681.1 L549.4 682.2 L549.2 683.3 L549.0 684.3 L548.6 685.4 L548.2 686.4 L547.7 687.4 L547.1 688.3 L546.4 689.2 L545.7 690.0 L544.9 690.8 L544.0 691.4 L543.1 692.1 L542.1 692.6 L541.0 693.1 L540.0 693.4 L536.6 694.6 L536.6 706.0" fill="none" stroke="#3c3c3c" stroke-width="1.15" stroke-linecap="butt" stroke-linejoin="round"/>
<text transform="translate(555.0 662.5) scale(0.893 1)">AIR BAG</text>
<text transform="translate(555.0 673.4) scale(0.893 1)">SLIDING</text>
<text transform="translate(555.0 684.3) scale(0.893 1)">CONTACT</text>
<path d="M536.6 706.0 L536.6 733.2" fill="none" stroke="#111" stroke-width="2.2" stroke-linecap="butt" stroke-linejoin="miter"/>
<text transform="translate(531.9 725.2) scale(0.893 1)" text-anchor="end">NCA</text>
<rect x="519.0" y="733.2" width="80.5" height="64.5" fill="#e7f3fc" stroke="#5c5c5c" stroke-width="1.3" stroke-dasharray="9.3 4.95"/>
<path d="M536.6 733.2 L536.6 744.0" fill="none" stroke="#3c3c3c" stroke-width="1.3" stroke-linecap="butt" stroke-linejoin="miter"/>
<path d="M536.6 788.8 L536.6 797.7" fill="none" stroke="#3c3c3c" stroke-width="1.3" stroke-linecap="butt" stroke-linejoin="miter"/>
<path d="M536.6 744.0 L582.9 744.0" fill="none" stroke="#3c3c3c" stroke-width="1.2" stroke-linecap="butt" stroke-linejoin="miter"/>
<path d="M582.9 788.8 L536.6 788.8" fill="none" stroke="#3c3c3c" stroke-width="1.2" stroke-linecap="butt" stroke-linejoin="miter"/>
<circle cx="536.6" cy="767.4" r="13.8" fill="none" stroke="#3c3c3c" stroke-width="1.2"/>
<circle cx="582.9" cy="767.4" r="13.8" fill="none" stroke="#3c3c3c" stroke-width="1.2"/>
<path d="M536.6 744.0 L536.6 759.9 C536.6 762.4 532.0 762.9 532.2 767.4 C532.0 771.9 536.6 772.4 536.6 774.9 L536.6 788.8" fill="none" stroke="#3c3c3c" stroke-width="1.1" stroke-linejoin="round"/>
<ellipse cx="536.4" cy="767.9" rx="3.7" ry="2.05" fill="none" stroke="#3c3c3c" stroke-width="0.95"/>
<path d="M582.9 744.0 L582.9 759.9 C582.9 762.4 578.3 762.9 578.5 767.4 C578.3 771.9 582.9 772.4 582.9 774.9 L582.9 788.8" fill="none" stroke="#3c3c3c" stroke-width="1.1" stroke-linejoin="round"/>
<ellipse cx="582.7" cy="767.9" rx="3.7" ry="2.05" fill="none" stroke="#3c3c3c" stroke-width="0.95"/>
<circle cx="536.6" cy="744.0" r="2.4" fill="#000"/>
<circle cx="536.6" cy="788.8" r="2.4" fill="#000"/>
<text transform="translate(605.5 740.8) scale(0.893 1)">STEERING</text>
<text transform="translate(605.5 751.8) scale(0.893 1)">WHEEL/</text>
<text transform="translate(605.5 762.9) scale(0.893 1)">SPEED</text>
<text transform="translate(605.5 773.9) scale(0.893 1)">CONTROL</text>
<text transform="translate(605.5 785.0) scale(0.893 1)">SWITCH</text>
<path d="M536.6 797.7 L536.6 825.0" fill="none" stroke="#111" stroke-width="2.2" stroke-linecap="butt" stroke-linejoin="miter"/>
<text transform="translate(531.9 817.1) scale(0.893 1)" text-anchor="end">NCA</text>
<rect x="522.3" y="825.0" width="29.2" height="55.0" fill="#e7f3fc" stroke="#5c5c5c" stroke-width="1.3" stroke-dasharray="9.3 4.95"/>
<path d="M536.6 825.0 L536.6 846.3" fill="none" stroke="#3c3c3c" stroke-width="1.2" stroke-linecap="butt" stroke-linejoin="miter"/>
<path d="M536.6 846.3 L536.8 846.3 L537.0 846.2 L537.2 846.2 L537.4 846.3 L537.6 846.3 L537.8 846.4 L538.0 846.4 L538.2 846.5 L538.4 846.6 L538.6 846.8 L538.8 846.9 L539.0 847.1 L539.1 847.3 L539.3 847.5 L539.4 847.7 L539.5 847.9 L539.6 848.1 L539.7 848.4 L539.7 848.7 L539.7 848.9 L539.8 849.2 L539.7 849.5 L539.7 849.7 L539.6 850.0 L539.5 850.3 L539.4 850.5 L539.3 850.8 L539.1 851.0 L538.9 851.3 L538.7 851.5 L538.5 851.7 L538.3 851.9 L538.0 852.1 L537.7 852.2 L537.4 852.3 L537.1 852.4 L536.8 852.5 L536.5 852.5 L536.1 852.6 L535.8 852.5 L535.4 852.5 L535.1 852.4 L534.8 852.3 L534.4 852.2 L534.1 852.1 L533.8 851.9 L533.5 851.7 L533.2 851.4 L533.0 851.2 L532.8 850.9 L532.5 850.6 L532.3 850.2 L532.2 849.9 L532.1 849.5 L532.0 849.1 L531.9 848.7 L531.8 848.3 L531.8 847.9 L531.9 847.5 L531.9 847.1 L532.0 846.7 L532.2 846.3 L532.3 846.0 L532.5 845.6 L532.8 845.2 L533.0 844.9 L533.3 844.6 L533.7 844.3 L534.0 844.0 L534.4 843.8 L534.8 843.5 L535.2 843.4 L535.6 843.2 L536.1 843.1 L536.5 843.1 L537.0 843.0 L537.5 843.0 L537.9 843.1 L538.4 843.2 L538.9 843.3 L539.3 843.5 L539.8 843.7 L540.2 843.9 L540.6 844.2 L541.0 844.5 L541.3 844.9 L541.7 845.3 L542.0 845.7 L542.2 846.1 L542.5 846.6 L542.6 847.1 L542.8 847.6 L542.9 848.1 L543.0 848.6 L543.0 849.2 L543.0 849.7 L542.9 850.2 L542.8 850.8 L542.6 851.3 L542.4 851.8 L542.1 852.3 L541.8 852.8 L541.5 853.2 L541.1 853.7 L540.7 854.1 L540.3 854.4 L539.8 854.8 L539.3 855.0 L538.7 855.3 L538.2 855.5 L537.6 855.6 L537.0 855.7 L536.4 855.8 L535.8 855.8 L535.2 855.7 L534.6 855.6 L534.0 855.5 L533.4 855.3 L532.9 855.0 L532.3 854.7 L531.8 854.4 L531.3 854.0 L530.8 853.6 L530.4 853.1 L530.0 852.6 L529.7 852.0 L529.4 851.5 L529.1 850.9 L528.9 850.2 L528.7 849.6 L528.6 848.9 L528.6 848.3 L528.6 847.6 L528.7 846.9 L528.8 846.3 L529.0 845.6 L529.2 845.0 L529.5 844.3 L529.9 843.7 L530.3 843.2 L530.7 842.6 L531.2 842.1 L531.7 841.6 L532.3 841.2 L532.9 840.9 L533.6 840.5 L534.2 840.3 L534.9 840.1 L535.7 839.9 L536.4 839.8 L537.1 839.8 L537.9 839.8 L538.6 839.9 L539.3 840.1 L540.1 840.3 L540.8 840.6 L541.4 840.9 L542.1 841.3 L542.7 841.8 L543.3 842.3 L543.8 842.8 L544.3 843.4 L544.8 844.1 L545.2 844.7 L545.5 845.4 L545.8 846.2 L546.0 847.0 L546.1 847.7 L546.2 848.5 L546.2 849.3 L546.2 850.2 L546.0 851.0 L545.9 851.8 L545.6 852.5 L545.3 853.3 L544.9 854.0 L544.4 854.7 L543.9 855.4 L543.4 856.0 L542.8 856.6 L542.1 857.1 L541.4 857.6 L540.6 858.0 L539.9 858.3 L539.0 858.6 L538.2 858.8 L537.3 859.0 L536.5 859.0 L535.6 859.0 L534.7 858.9 L533.9 858.8 L533.0 858.6 L532.2 858.3 L531.4 857.9 L530.6 857.5 L529.8 857.0 L529.1 856.4 L528.5 855.8 L527.8 855.1 L527.3 854.4 L526.8 853.6 L526.4 852.8 L526.0 851.9 L525.7 851.0 L525.5 850.1 L525.4 849.2 L525.4 848.3 L525.4 847.3 L525.5 846.4 L525.7 845.5 L525.9 844.5 L526.3 843.6 L526.7 842.8 L527.2 841.9 L527.7 841.1 L528.3 840.4 L529.0 839.7 L529.8 839.1 L530.6 838.5 L531.4 838.0 L532.3 837.5 L533.2 837.2 L534.2 836.9 L535.2 836.7 L536.2 836.6 L537.2 836.5 L538.2 836.6 L539.2 836.7 L540.2 836.9 L541.2 837.2 L542.1 837.6 L543.0 838.1 L543.9 838.6 L544.8 839.2 L545.5 839.9 L546.3 840.7 L546.9 841.5 L547.5 842.3 L548.1 843.3 L548.5 844.2 L548.9 845.2 L549.1 846.2 L549.3 847.3 L549.5 848.4 L549.5 849.4 L549.4 850.5 L549.2 851.6 L549.0 852.6 L548.6 853.7 L548.2 854.7 L547.7 855.7 L547.1 856.6 L546.4 857.5 L545.7 858.3 L544.9 859.1 L544.0 859.7 L543.1 860.4 L542.1 860.9 L541.0 861.4 L540.0 861.7 L536.6 862.9 L536.6 875.0" fill="none" stroke="#3c3c3c" stroke-width="1.15" stroke-linecap="butt" stroke-linejoin="round"/>
<text transform="translate(555.0 830.8) scale(0.893 1)">AIR BAG</text>
<text transform="translate(555.0 841.6) scale(0.893 1)">SLIDING</text>
<text transform="translate(555.0 852.5) scale(0.893 1)">CONTACT</text>
<path d="M690.2 605.6 L690.2 644.9" fill="none" stroke="#f8b4b4" stroke-width="0.95" stroke-linecap="butt" stroke-linejoin="miter"/>
<path d="M688.9 604.3 L688.9 643.6" fill="none" stroke="#22ecf2" stroke-width="1.85" stroke-linecap="butt" stroke-linejoin="miter"/>
<text transform="translate(685.0 621.1) scale(0.893 1)" text-anchor="end">LT BLU/RED</text>
<text transform="translate(680.5 644.8) scale(0.893 1)" text-anchor="end">22</text>
<rect x="699.2" y="645.5" width="27.8" height="0.85" fill="#5a5a5a"/>
<text transform="translate(699.2 644.8) scale(0.893 1)">C220B</text>
<path d="M683.4 645.9 L686.3 643.3 L691.3 643.3 L694.2 645.9" fill="none" stroke="#3c3c3c" stroke-width="1.15" stroke-linejoin="round"/>
<rect x="669.0" y="650.0" width="40.9" height="63.8" fill="#e7f3fc" stroke="#5c5c5c" stroke-width="1.3" stroke-dasharray="9.3 4.95"/>
<path d="M688.8 650.0 L688.8 667.2" fill="none" stroke="#3c3c3c" stroke-width="1.2" stroke-linecap="butt" stroke-linejoin="miter"/>
<path d="M688.8 694.6 L688.8 713.8" fill="none" stroke="#3c3c3c" stroke-width="1.2" stroke-linecap="butt" stroke-linejoin="miter"/>
<path d="M684.6 654.8 L688.8 650.0 L693.0 654.8" fill="none" stroke="#3c3c3c" stroke-width="1.1" stroke-linejoin="round"/>
<path d="M684.6 709.0 L688.8 713.8 L693.0 709.0" fill="none" stroke="#3c3c3c" stroke-width="1.1" stroke-linejoin="round"/>
<path d="M684.5 666.0 L688.8 662.8 L693.1 666.0" fill="none" stroke="#3c3c3c" stroke-width="1.1" stroke-linejoin="round"/>
<path d="M684.7 696.0 L688.8 699.2 L692.9 696.0" fill="none" stroke="#3c3c3c" stroke-width="1.1" stroke-linejoin="round"/>
<circle cx="688.8" cy="680.9" r="13.7" fill="none" stroke="#3c3c3c" stroke-width="1.2" stroke-dasharray="10.5 5"/>
<path d="M688.8 667.2 L688.8 673.4 C688.8 675.9 684.2 676.4 684.4 680.9 C684.2 685.4 688.8 685.9 688.8 688.4 L688.8 694.6" fill="none" stroke="#3c3c3c" stroke-width="1.1" stroke-linejoin="round"/>
<ellipse cx="688.6" cy="681.4" rx="3.7" ry="2.05" fill="none" stroke="#3c3c3c" stroke-width="0.95"/>
<path d="M684.9 672.0 L688.8 667.5 L692.7 672.0" fill="none" stroke="#3c3c3c" stroke-width="1.1" stroke-linejoin="round"/>
<path d="M684.9 689.8 L688.8 694.3 L692.7 689.8" fill="none" stroke="#3c3c3c" stroke-width="1.1" stroke-linejoin="round"/>
<text transform="translate(715.5 655.8) scale(0.893 1)">INSTRUMENT</text>
<text transform="translate(715.5 666.8) scale(0.893 1)">CLUSTER</text>
<text transform="translate(715.5 677.9) scale(0.893 1)">(6 BULBS)</text>
<path d="M683.4 716.8 L686.3 719.4 L691.3 719.4 L694.2 716.8" fill="none" stroke="#3c3c3c" stroke-width="1.15" stroke-linejoin="round"/>
<text transform="translate(684.0 725.0) scale(0.893 1)" text-anchor="end">1</text>
<rect x="699.8" y="725.8" width="27.8" height="0.85" fill="#5a5a5a"/>
<text transform="translate(699.8 725.0) scale(0.893 1)">C220A</text>
<path d="M688.8 719.4 L688.8 866.0" fill="none" stroke="#5c5c5c" stroke-width="2.15" stroke-linecap="butt" stroke-linejoin="miter"/>
<text transform="translate(669.0 793.8) scale(0.893 1)">BLK</text>
<rect x="682.0" y="71.1" width="152.8" height="75.8" fill="#e7f3fc" stroke="#5c5c5c" stroke-width="1.3" stroke-dasharray="9.3 4.95"/>
<rect x="759.9" y="87.9" width="59.6" height="45.5" fill="none" stroke="#5c5c5c" stroke-width="1.3" stroke-dasharray="9.3 4.95"/>
<text transform="translate(780.0 53.8) scale(0.893 1)" text-anchor="middle">HOT AT</text>
<text transform="translate(780.0 64.7) scale(0.893 1)" text-anchor="middle">ALL TIMES</text>
<path d="M776.8 75.9 L781.0 71.1 L785.2 75.9" fill="none" stroke="#3c3c3c" stroke-width="1.1" stroke-linejoin="round"/>
<path d="M781.0 71.1 L781.0 98.4" fill="none" stroke="#3c3c3c" stroke-width="1.2" stroke-linecap="butt" stroke-linejoin="miter"/>
<circle cx="781.0" cy="98.4" r="2.4" fill="#000"/>
<circle cx="766.3" cy="124.0" r="2.4" fill="#000"/>
<circle cx="796.0" cy="124.0" r="2.4" fill="#000"/>
<path d="M781.0 98.4 L767.0 122.6" fill="none" stroke="#3c3c3c" stroke-width="1.2" stroke-linecap="butt" stroke-linejoin="miter"/>
<path d="M767.3 122.2 L767.9 114.8 L772.2 117.3 Z" fill="#111"/>
<path d="M776.5 107.8 L800.0 107.8" fill="none" stroke="#444" stroke-width="1.2" stroke-dasharray="9 4" stroke-linecap="butt" stroke-linejoin="miter"/>
<text transform="translate(786.9 97.2) scale(0.893 1)">30</text>
<text transform="translate(781.9 131.1) scale(0.893 1)">87</text>
<text transform="translate(695.0 95.5) scale(0.893 1)">ACCESSORY</text>
<text transform="translate(695.0 106.7) scale(0.893 1)">DELAY REALY</text>
<path d="M796.0 124.0 L796.0 133.4" fill="none" stroke="#3c3c3c" stroke-width="1.2" stroke-linecap="butt" stroke-linejoin="miter"/>
<path d="M791.8 128.6 L796.0 133.4 L800.2 128.6" fill="none" stroke="#3c3c3c" stroke-width="1.1" stroke-linejoin="round"/>
<path d="M790.6 136.9 L793.5 139.5 L798.5 139.5 L801.4 136.9" fill="none" stroke="#3c3c3c" stroke-width="1.15" stroke-linejoin="round"/>
<path d="M796.0 139.5 L796.0 146.9" fill="none" stroke="#3c3c3c" stroke-width="1.2" stroke-linecap="butt" stroke-linejoin="miter"/>
<path d="M791.8 142.1 L796.0 146.9 L800.2 142.1" fill="none" stroke="#3c3c3c" stroke-width="1.1" stroke-linejoin="round"/>
<path d="M790.6 151.9 L793.5 154.5 L798.5 154.5 L801.4 151.9" fill="none" stroke="#3c3c3c" stroke-width="1.15" stroke-linejoin="round"/>
<text transform="translate(788.6 160.9) scale(0.893 1)" text-anchor="end">10</text>
<rect x="804.0" y="161.7" width="27.8" height="0.85" fill="#5a5a5a"/>
<text transform="translate(804.0 160.9) scale(0.893 1)">C270A</text>
<text transform="translate(839.8 77.2) scale(0.893 1)">CENTRAL</text>
<text transform="translate(839.8 88.2) scale(0.893 1)">JUNCTION</text>
<text transform="translate(839.8 98.7) scale(0.893 1)">BOX</text>
<text transform="translate(839.8 110.8) scale(0.893 1)">(UNDER LEFT</text>
<text transform="translate(839.8 121.8) scale(0.893 1)">SIDE OF DASH)</text>
<path d="M796.0 154.5 L796.0 346.4" fill="none" stroke="#27eef3" stroke-width="2.15" stroke-linecap="butt" stroke-linejoin="miter"/>
<path d="M796.5 155.0 L796.5 346.9" fill="none" stroke="#56dbe0" stroke-width="1.1" stroke-linecap="butt" stroke-linejoin="miter"/>
<path d="M796.0 359.8 L796.0 735.1" fill="none" stroke="#27eef3" stroke-width="2.15" stroke-linecap="butt" stroke-linejoin="miter"/>
<path d="M796.5 360.3 L796.5 735.6" fill="none" stroke="#56dbe0" stroke-width="1.1" stroke-linecap="butt" stroke-linejoin="miter"/>
<text transform="translate(793.7 177.8) scale(0.893 1)" text-anchor="end">LT BLU/</text>
<text transform="translate(793.7 188.8) scale(0.893 1)" text-anchor="end">BLK</text>
<path d="M803.3 353.7 L940.0 353.7" fill="none" stroke="#27eef3" stroke-width="2.15" stroke-dasharray="9.4 4.9" stroke-linecap="butt" stroke-linejoin="miter"/>
<path d="M803.8 354.2 L940.5 354.2" fill="none" stroke="#56dbe0" stroke-width="1.1" stroke-dasharray="9.4 4.9" stroke-linecap="butt" stroke-linejoin="miter"/>
<circle cx="796.0" cy="353.7" r="3.2" fill="#000"/>
<text transform="translate(825.4 347.1) scale(0.893 1)">LT BLU/BLK</text>
<text transform="translate(803.0 366.2) scale(0.893 1)">S230</text>
<text transform="translate(803.0 377.4) scale(0.893 1)">(MAIN WIRING HARNESS,</text>
<text transform="translate(803.0 388.6) scale(0.893 1)">NEAR GLOVE BOX)</text>
<text transform="translate(792.7 377.4) scale(0.893 1)" text-anchor="end">LT BLU/</text>
<text transform="translate(792.7 388.6) scale(0.893 1)" text-anchor="end">BLK</text>
<text transform="translate(792.7 705.2) scale(0.893 1)" text-anchor="end">LT BLU/</text>
<text transform="translate(792.7 716.2) scale(0.893 1)" text-anchor="end">BLK</text>
<text transform="translate(787.8 735.9) scale(0.893 1)" text-anchor="end">2</text>
<path d="M790.7 737.7 L793.6 735.1 L798.6 735.1 L801.5 737.7" fill="none" stroke="#3c3c3c" stroke-width="1.15" stroke-linejoin="round"/>
<path d="M790.7 742.9 L793.6 740.3 L798.6 740.3 L801.5 742.9" fill="none" stroke="#3c3c3c" stroke-width="1.15" stroke-linejoin="round"/>
<path d="M796.1 740.3 L796.1 764.0" fill="none" stroke="#111" stroke-width="2.2" stroke-linecap="butt" stroke-linejoin="miter"/>
<text transform="translate(792.4 755.6) scale(0.893 1)" text-anchor="end">NCA</text>
<rect x="775.6" y="764.0" width="41.3" height="79.4" fill="#e7f3fc" stroke="#5c5c5c" stroke-width="1.3" stroke-dasharray="9.3 4.95"/>
<path d="M796.2 764.0 L796.2 773.0" fill="none" stroke="#555" stroke-width="1.1" stroke-linecap="butt" stroke-linejoin="miter"/>
<path d="M796.2 773.0 L799.6 775.7 L792.7 780.8 L799.6 785.7 L792.7 790.6 L799.6 794.6 L793.3 797.7 L796.2 799.6 L796.2 843.4" fill="none" stroke="#444" stroke-width="1.05" stroke-linecap="butt" stroke-linejoin="round"/>
<circle cx="796.3" cy="816.8" r="12.9" fill="none" stroke="#4a4a4a" stroke-width="1.05"/>
<path d="M792.6 813.8 L800.4 813.8 L796.5 820.4 Z" fill="#111"/>
<path d="M792.8 820.9 L800.2 820.9" fill="none" stroke="#333" stroke-width="1.1" stroke-linecap="butt" stroke-linejoin="miter"/>
<path d="M791.6 814.4 L787.4 814.4" fill="none" stroke="#222" stroke-width="1" stroke-linecap="butt" stroke-linejoin="miter"/>
<path d="M791.6 818.6 L787.4 818.6" fill="none" stroke="#222" stroke-width="1" stroke-linecap="butt" stroke-linejoin="miter"/>
<path d="M786 814.4 L789 812.6 L789 816.2 Z M786 818.6 L789 816.8 L789 820.4 Z" fill="#111"/>
<text transform="translate(822.0 771.5) scale(0.893 1)">REAR</text>
<text transform="translate(822.0 782.7) scale(0.893 1)">WINDOW</text>
<text transform="translate(822.0 793.8) scale(0.893 1)">ADJUST</text>
<text transform="translate(822.0 805.0) scale(0.893 1)">SWITCH</text>
<path d="M796.0 843.4 L796.0 866.0" fill="none" stroke="#111" stroke-width="2.2" stroke-linecap="butt" stroke-linejoin="miter"/>
<text transform="translate(792.2 862.2) scale(0.893 1)" text-anchor="end">NCA</text>
<path d="M909.5 596.7 L940.0 596.7" fill="none" stroke="#fb6e6e" stroke-width="1.1" stroke-linecap="butt" stroke-linejoin="miter"/>
<path d="M909.5 598.0 L940.0 598.0" fill="none" stroke="#22ecf2" stroke-width="1.5" stroke-linecap="butt" stroke-linejoin="miter"/>
<text transform="translate(932.9 617.5) scale(0.893 1)">LT</text>
<text transform="translate(922.3 628.5) scale(0.893 1)">BLU/</text>
<text transform="translate(924.2 640.0) scale(0.893 1)">RED</text>
<text transform="translate(931.0 674.5) scale(0.893 1)">1</text>
<rect x="928.6" y="679.1" width="31.4" height="64.5" fill="#e7f3fc" stroke="#5c5c5c" stroke-width="1.3" stroke-dasharray="9.3 4.95"/>
<circle cx="169.9" cy="597.7" r="3.2" fill="#000"/>
<circle cx="231.1" cy="597.7" r="3.2" fill="#000"/>
<circle cx="292.5" cy="597.7" r="3.2" fill="#000"/>
<circle cx="399.2" cy="597.7" r="3.2" fill="#000"/>
<circle cx="536.6" cy="597.7" r="3.2" fill="#000"/>
<circle cx="688.8" cy="597.7" r="3.2" fill="#000"/>
<circle cx="902.8" cy="597.7" r="3.2" fill="#000"/>
</g>
<circle cx="884" cy="61.7" r="30.6" fill="#e9e9e9" fill-opacity="0.12"/>
<circle cx="884" cy="61.7" r="29.6" fill="#e9e9e9" fill-opacity="0.72"/>
<path d="M873 51.2 L895 73.2 M895 51.2 L873 73.2" stroke="#8e8e8e" stroke-width="4.4" stroke-linecap="round" fill="none"/>
<circle cx="884.1" cy="443.8" r="30.6" fill="#e9e9e9" fill-opacity="0.12"/>
<circle cx="884.1" cy="443.8" r="29.6" fill="#e9e9e9" fill-opacity="0.72"/>
<path d="M879.2 434.2 L888.8 444.1 L879.2 454" stroke="#8e8e8e" stroke-width="2.7" fill="none"/>
<rect x="11.3" y="865.7" width="923.2" height="30" fill="#3b4555"/>
<rect x="240.9" y="865.7" width="2.1" height="30" fill="#cfd3d9"/>
<rect x="393.9" y="865.7" width="2.1" height="30" fill="#cfd3d9"/>
<rect x="547.8" y="865.7" width="2.1" height="30" fill="#cfd3d9"/>
<rect x="778.0" y="865.7" width="2.1" height="30" fill="#cfd3d9"/>
<g fill="#fff" stroke="#fff" stroke-width="0.35" font-size="15.2" text-rendering="geometricPrecision">
<text transform="translate(22.6 891.6) scale(0.936 1)">Interior Lights - Instrume</text>
<text transform="translate(308.4 891.6) scale(0.862 1)">SEARCH</text>
<text transform="translate(432.2 891.6) scale(0.838 1)">HIDE WIRES</text>
</g>
<circle cx="220.2" cy="886.4" r="10" fill="none" stroke="#fff" stroke-width="2.6"/>
<circle cx="220.3" cy="882.3" r="1.6" fill="#fff"/><rect x="218.9" y="885" width="2.8" height="6" fill="#fff"/>
<circle cx="286.6" cy="884.3" r="7" fill="none" stroke="#fff" stroke-width="3"/>
<path d="M291.6 889.6 L297 895.4" stroke="#fff" stroke-width="3.2" fill="none"/>
<g fill="#fff"><circle cx="405.4" cy="886.4" r="2.5"/><rect x="410.1" y="885.3" width="2" height="2.2"/><rect x="414.1" y="885.3" width="2" height="2.2"/><rect x="419.2" y="885.3" width="2" height="2.2"/><rect x="423.9" y="885.3" width="2" height="2.2"/><circle cx="415.1" cy="877.4" r="2.9"/><circle cx="424.9" cy="877.4" r="2.9"/><rect x="414.1" y="881.2" width="2" height="1.9"/><rect x="423.9" y="881.2" width="2" height="1.9"/></g>
<path d="M520.9 880.3 A9 9 0 0 1 536.7 886.3" fill="none" stroke="#fff" stroke-width="3"/>
<path d="M517.4 875.9 L517.4 883.7 L525.2 883.7 Z" fill="#fff"/>
<path d="M518.7 886.3 A9 9 0 0 0 527.7 895.2" fill="none" stroke="#fff" stroke-width="3"/>
<path d="M531.4 888.9 L537.8 888.9 L537.8 895.5 Z" fill="#fff"/>
<rect x="570.8" y="877.8" width="18.8" height="20" fill="none" stroke="#fff" stroke-width="3"/>
<circle cx="621.9" cy="886.6" r="10.2" fill="none" stroke="#fff" stroke-width="2.6"/><rect x="616.2" y="885.1" width="11.6" height="2.8" fill="#fff"/>
<circle cx="664.1" cy="886.6" r="10.2" fill="none" stroke="#fff" stroke-width="2.6"/><rect x="658.3" y="885.1" width="11.6" height="2.8" fill="#fff"/><rect x="662.7" y="880.8" width="2.8" height="10" fill="#fff"/>
<path d="M696.6 882.2 L701.8 882.2 L701.8 876.3 M716.6 882.2 L710.6 882.2 L710.6 876.3 M696.6 889.6 L701.8 889.6 L701.8 896 M716.6 889.6 L710.6 889.6 L710.6 896" fill="none" stroke="#fff" stroke-width="3"/>
<path d="M753.3 882.2 L758.6 887.4 L753.3 892.6 L748.1 887.4 Z" fill="none" stroke="#fff" stroke-width="3"/>
<path d="M746.9 878.5 A8.8 8.8 0 0 0 737.8 887.3 A8.8 8.8 0 0 0 741.5 894.5" fill="none" stroke="#fff" stroke-width="3.1"/>
<path d="M746.1 873.5 L752 878.4 L746.4 883 Z" fill="#fff"/>
<rect x="829.9" y="876.1" width="14.4" height="4.4" fill="#fff"/>
<path d="M825.4 896 L825.4 884.8 Q825.4 881.7 828.5 881.7 L844.7 881.7 Q847.8 881.7 847.8 884.8 L847.8 896 Z" fill="#fff"/>
<circle cx="844.4" cy="885.2" r="1.1" fill="#3b4555"/><rect x="832" y="888.7" width="9.5" height="4" fill="#3b4555"/>
<rect x="877.6" y="877.6" width="14.7" height="22" rx="2" fill="none" stroke="#fff" stroke-width="3"/>
</svg>
</body></html>
